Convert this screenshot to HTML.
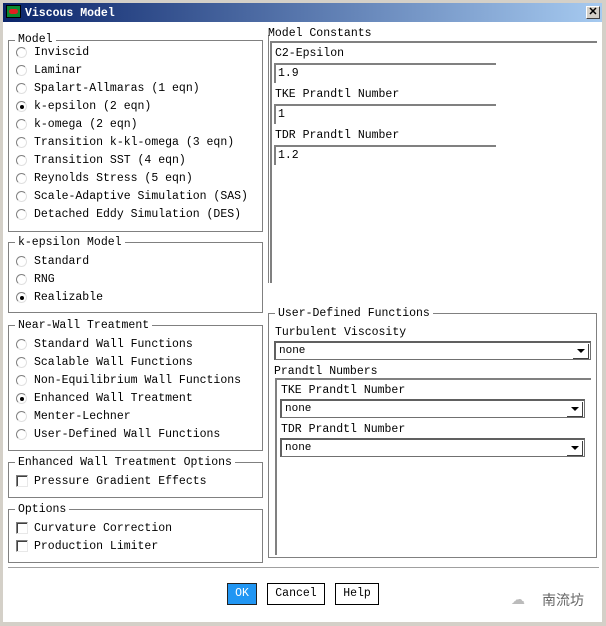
<!DOCTYPE html><html><head><meta charset="utf-8"><style>
*{margin:0;padding:0;box-sizing:border-box}
body{width:606px;height:626px;background:#d4d0c8;position:relative;overflow:hidden;font-family:"Liberation Mono","Noto Sans CJK SC",monospace;font-size:11.5px;color:#000}
.a{position:absolute}
#win{position:absolute;left:3px;top:3px;width:599px;height:619px;background:#fff}
#title{position:absolute;left:3px;top:3px;width:599px;height:19px;background:linear-gradient(90deg,#0a246a,#a6caf0)}
.g{position:absolute;border:1px solid #808080}
.lg{position:absolute;background:#fff;padding:0 3px;line-height:13px;white-space:pre}
.t{position:absolute;white-space:pre;line-height:13px}
.r{position:absolute;width:11px;height:11px;border-radius:50%;border:1px solid;border-color:#808080 #e0e0e0 #e0e0e0 #808080;background:#fff}
.r.on::after{content:"";position:absolute;left:3px;top:3px;width:4px;height:4px;border-radius:50%;background:#000}
.c{position:absolute;width:12px;height:12px;border:1px solid;border-color:#808080 #e8e8e8 #e8e8e8 #808080;box-shadow:inset 1px 1px 0 #404040}
.in{position:absolute;height:20px;border-top:2px solid #808080;border-left:2px solid #808080;background:#fff;line-height:18px;padding-left:2px;white-space:pre}
.sel{position:absolute;height:19px;border:1px solid #707070;border-top:2px solid #606060;border-left:2px solid #606060;background:#fff;line-height:16px;padding-left:3px;font-size:11px}
.sel::after{content:"";position:absolute;right:1px;top:1px;width:15px;height:14px;border-right:1px solid #404040;border-bottom:1px solid #404040;background:#fff}
.arr{position:absolute;right:5px;top:6px;width:0;height:0;border-left:4px solid transparent;border-right:4px solid transparent;border-top:4px solid #000;z-index:2}
.b{position:absolute;height:22px;border:1px solid #000;background:#fff;text-align:center;line-height:20px}
</style></head><body>
<div id="win"></div>
<div id="title"></div>
<div class="a" style="left:6px;top:5px;width:15px;height:13px;background:#0a8a30;border:1px solid #000"><div class="a" style="left:2px;top:3px;width:9px;height:5px;background:#e02020;border-radius:3px"></div></div>
<div class="t" style="left:25px;top:7px;color:#fff;font-weight:bold;font-size:11.5px">Viscous Model</div>
<div class="a" style="left:586px;top:6px;width:14px;height:13px;background:#d4d0c8;border:1px solid;border-color:#fff #404040 #404040 #fff;text-align:center;line-height:11px;font-size:11px;font-weight:bold;font-family:'Liberation Sans',sans-serif">✕</div>

<div class="g" style="left:8px;top:40px;width:255px;height:192px"></div>
<div class="lg" style="left:15px;top:33px">Model</div>
<div class="r" style="left:16px;top:47px"></div><div class="t" style="left:34px;top:46px">Inviscid</div>
<div class="r" style="left:16px;top:65px"></div><div class="t" style="left:34px;top:64px">Laminar</div>
<div class="r" style="left:16px;top:83px"></div><div class="t" style="left:34px;top:82px">Spalart-Allmaras (1 eqn)</div>
<div class="r on" style="left:16px;top:101px"></div><div class="t" style="left:34px;top:100px">k-epsilon (2 eqn)</div>
<div class="r" style="left:16px;top:119px"></div><div class="t" style="left:34px;top:118px">k-omega (2 eqn)</div>
<div class="r" style="left:16px;top:137px"></div><div class="t" style="left:34px;top:136px">Transition k-kl-omega (3 eqn)</div>
<div class="r" style="left:16px;top:155px"></div><div class="t" style="left:34px;top:154px">Transition SST (4 eqn)</div>
<div class="r" style="left:16px;top:173px"></div><div class="t" style="left:34px;top:172px">Reynolds Stress (5 eqn)</div>
<div class="r" style="left:16px;top:191px"></div><div class="t" style="left:34px;top:190px">Scale-Adaptive Simulation (SAS)</div>
<div class="r" style="left:16px;top:209px"></div><div class="t" style="left:34px;top:208px">Detached Eddy Simulation (DES)</div>

<div class="g" style="left:8px;top:242px;width:255px;height:71px"></div>
<div class="lg" style="left:15px;top:236px">k-epsilon Model</div>
<div class="r" style="left:16px;top:256px"></div><div class="t" style="left:34px;top:255px">Standard</div>
<div class="r" style="left:16px;top:274px"></div><div class="t" style="left:34px;top:273px">RNG</div>
<div class="r on" style="left:16px;top:292px"></div><div class="t" style="left:34px;top:291px">Realizable</div>

<div class="g" style="left:8px;top:325px;width:255px;height:126px"></div>
<div class="lg" style="left:15px;top:319px">Near-Wall Treatment</div>
<div class="r" style="left:16px;top:339px"></div><div class="t" style="left:34px;top:338px">Standard Wall Functions</div>
<div class="r" style="left:16px;top:357px"></div><div class="t" style="left:34px;top:356px">Scalable Wall Functions</div>
<div class="r" style="left:16px;top:375px"></div><div class="t" style="left:34px;top:374px">Non-Equilibrium Wall Functions</div>
<div class="r on" style="left:16px;top:393px"></div><div class="t" style="left:34px;top:392px">Enhanced Wall Treatment</div>
<div class="r" style="left:16px;top:411px"></div><div class="t" style="left:34px;top:410px">Menter-Lechner</div>
<div class="r" style="left:16px;top:429px"></div><div class="t" style="left:34px;top:428px">User-Defined Wall Functions</div>

<div class="g" style="left:8px;top:462px;width:255px;height:36px"></div>
<div class="lg" style="left:15px;top:456px">Enhanced Wall Treatment Options</div>
<div class="c" style="left:16px;top:475px"></div><div class="t" style="left:34px;top:475px">Pressure Gradient Effects</div>

<div class="g" style="left:8px;top:509px;width:255px;height:54px"></div>
<div class="lg" style="left:15px;top:503px">Options</div>
<div class="c" style="left:16px;top:522px"></div><div class="t" style="left:34px;top:522px">Curvature Correction</div>
<div class="c" style="left:16px;top:540px"></div><div class="t" style="left:34px;top:540px">Production Limiter</div>

<div class="a" style="left:268px;top:35px;width:1px;height:248px;background:#808080"></div>
<div class="t" style="left:268px;top:27px">Model Constants</div>
<div class="a" style="left:270px;top:41px;width:327px;height:2px;background:#808080"></div>
<div class="a" style="left:270px;top:41px;width:2px;height:242px;background:#808080"></div>
<div class="t" style="left:275px;top:47px">C2-Epsilon</div>
<div class="in" style="left:274px;top:63px;width:222px">1.9</div>
<div class="t" style="left:275px;top:88px">TKE Prandtl Number</div>
<div class="in" style="left:274px;top:104px;width:222px">1</div>
<div class="t" style="left:275px;top:129px">TDR Prandtl Number</div>
<div class="in" style="left:274px;top:145px;width:222px">1.2</div>

<div class="g" style="left:268px;top:313px;width:329px;height:245px"></div>
<div class="lg" style="left:275px;top:307px">User-Defined Functions</div>
<div class="t" style="left:275px;top:326px">Turbulent Viscosity</div>
<div class="sel" style="left:274px;top:341px;width:317px">none<span class="arr"></span></div>
<div class="t" style="left:274px;top:365px">Prandtl Numbers</div>
<div class="a" style="left:275px;top:378px;width:316px;height:2px;background:#808080"></div>
<div class="a" style="left:275px;top:378px;width:2px;height:177px;background:#808080"></div>
<div class="t" style="left:281px;top:384px">TKE Prandtl Number</div>
<div class="sel" style="left:280px;top:399px;width:305px">none<span class="arr"></span></div>
<div class="t" style="left:281px;top:423px">TDR Prandtl Number</div>
<div class="sel" style="left:280px;top:438px;width:305px">none<span class="arr"></span></div>

<div class="a" style="left:8px;top:567px;width:591px;height:1px;background:#a0a0a0"></div>
<div class="b" style="left:227px;top:583px;width:30px;background:#2196f3;color:#fff;border-color:#222">OK</div>
<div class="b" style="left:267px;top:583px;width:58px">Cancel</div>
<div class="b" style="left:335px;top:583px;width:44px">Help</div>
<div class="t" style="left:511px;top:593px;color:#bbb;font-size:14px;font-family:'Liberation Sans',sans-serif">☁</div>
<div class="t" style="left:542px;top:592px;color:#666;font-size:14px;line-height:16px;font-family:'Noto Sans CJK SC',sans-serif">南流坊</div>
</body></html>
